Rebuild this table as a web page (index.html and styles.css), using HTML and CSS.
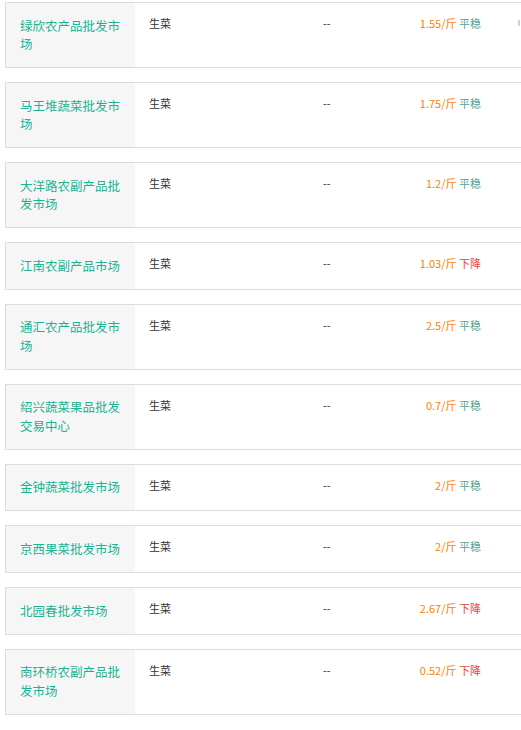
FILE: index.html
```html
<!DOCTYPE html>
<html lang="zh-CN">
<head>
<meta charset="utf-8">
<title>市场行情</title>
<link rel="stylesheet" href="styles.css">
</head>
<body>
<div class="list">
  <div class="card">
    <div class="name">绿欣农产品批发市场</div>
    <div class="kind">生菜</div>
    <div class="spec">--</div>
    <div class="price"><span class="num">1.55/斤</span> <span class="flat">平稳</span></div>
    <div class="extra"><span class="sliver"></span></div>
  </div>
  <div class="card">
    <div class="name">马王堆蔬菜批发市场</div>
    <div class="kind">生菜</div>
    <div class="spec">--</div>
    <div class="price"><span class="num">1.75/斤</span> <span class="flat">平稳</span></div>
    <div class="extra"></div>
  </div>
  <div class="card">
    <div class="name">大洋路农副产品批发市场</div>
    <div class="kind">生菜</div>
    <div class="spec">--</div>
    <div class="price"><span class="num">1.2/斤</span> <span class="flat">平稳</span></div>
    <div class="extra"></div>
  </div>
  <div class="card">
    <div class="name">江南农副产品市场</div>
    <div class="kind">生菜</div>
    <div class="spec">--</div>
    <div class="price"><span class="num">1.03/斤</span> <span class="down">下降</span></div>
    <div class="extra"></div>
  </div>
  <div class="card">
    <div class="name">通汇农产品批发市场</div>
    <div class="kind">生菜</div>
    <div class="spec">--</div>
    <div class="price"><span class="num">2.5/斤</span> <span class="flat">平稳</span></div>
    <div class="extra"></div>
  </div>
  <div class="card">
    <div class="name">绍兴蔬菜果品批发交易中心</div>
    <div class="kind">生菜</div>
    <div class="spec">--</div>
    <div class="price"><span class="num">0.7/斤</span> <span class="flat">平稳</span></div>
    <div class="extra"></div>
  </div>
  <div class="card">
    <div class="name">金钟蔬菜批发市场</div>
    <div class="kind">生菜</div>
    <div class="spec">--</div>
    <div class="price"><span class="num">2/斤</span> <span class="flat">平稳</span></div>
    <div class="extra"></div>
  </div>
  <div class="card">
    <div class="name">京西果菜批发市场</div>
    <div class="kind">生菜</div>
    <div class="spec">--</div>
    <div class="price"><span class="num">2/斤</span> <span class="flat">平稳</span></div>
    <div class="extra"></div>
  </div>
  <div class="card">
    <div class="name">北园春批发市场</div>
    <div class="kind">生菜</div>
    <div class="spec">--</div>
    <div class="price"><span class="num">2.67/斤</span> <span class="down">下降</span></div>
    <div class="extra"></div>
  </div>
  <div class="card">
    <div class="name">南环桥农副产品批发市场</div>
    <div class="kind">生菜</div>
    <div class="spec">--</div>
    <div class="price"><span class="num">0.52/斤</span> <span class="down">下降</span></div>
    <div class="extra"></div>
  </div>
</div>
</body>
</html>
```
FILE: styles.css
```css
html, body {
  margin: 0;
  padding: 0;
  background: #ffffff;
  overflow: hidden;
}

body {
  font-family: "Noto Sans CJK SC", "Noto Sans", sans-serif;
  color: #333333;
}

.list {
  display: flex;
  flex-direction: column;
  gap: 14px;
  padding: 2px 0 0 5px;
  width: 620px;
}

.card {
  display: flex;
  align-items: stretch;
  border: 1px solid #dddddd;
  background: #ffffff;
}

.name {
  flex: 0 0 129px;
  box-sizing: border-box;
  background: #f6f6f6;
  color: #1ab394;
  font-size: 12.5px;
  line-height: 18.3px;
  padding: 13.7px 10px 13.7px 14px;
  word-break: break-all;
}

.kind,
.spec,
.price,
.extra {
  font-size: 11px;
  line-height: 16px;
  padding-top: 12px;
  box-sizing: border-box;
  white-space: nowrap;
}

.kind {
  flex: 0 0 174px;
  padding-left: 14px;
}

.spec {
  flex: 0 0 100px;
  padding-left: 14px;
}

.price {
  flex: 0 0 72px;
  text-align: right;
}

.num {
  color: #ff8000;
}

.flat {
  color: #5a9f92;
}

.down {
  color: #e8463f;
}

.extra {
  flex: 0 0 60px;
  padding-left: 37px;
  padding-top: 17px;
}

.sliver {
  display: block;
  width: 2px;
  height: 6px;
  background: #d4d0cc;
}
```
